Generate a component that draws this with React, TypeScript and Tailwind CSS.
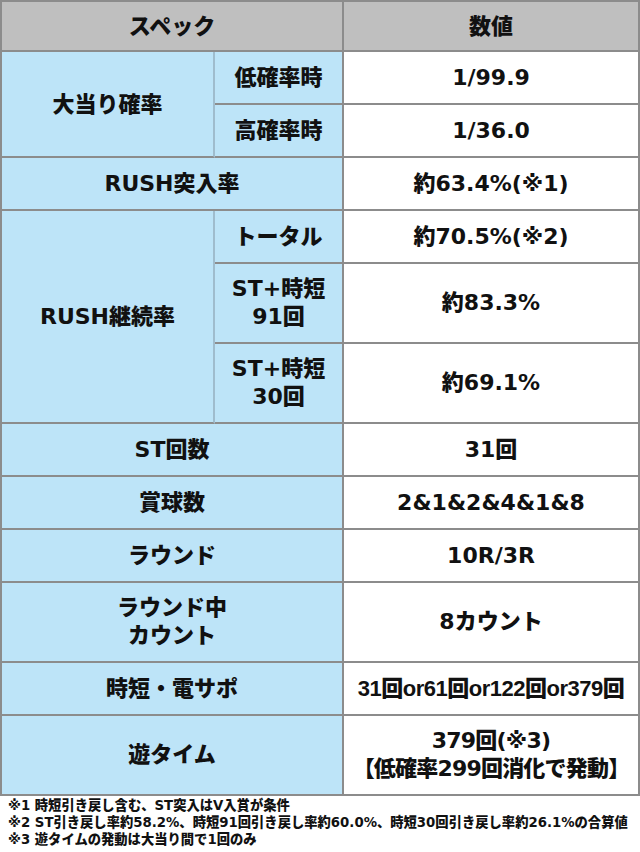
const font = '"DejaVu Sans", "Noto Sans CJK JP", sans-serif';

type Sub = { label: string[]; value: string[]; tall?: boolean };

function Value({ lines, className = '' }: { lines: string[]; className?: string }) {
  return (
    <div className={`flex flex-1 flex-col items-center justify-center text-[22px] leading-[28px] font-black ${className}`}>
      {lines.map((l, i) => (
        <span key={i}>{l}</span>
      ))}
    </div>
  );
}

function Label({ lines }: { lines: string[] }) {
  return (
    <>
      {lines.map((l, i) => (
        <span key={i}>{l}</span>
      ))}
    </>
  );
}

function SingleRow({ label, value, tall, valueClass }: { label: string[]; value: string[]; tall?: boolean; valueClass?: string }) {
  return (
    <div className={`flex border-b-2 border-[#8c8c8c] ${tall ? 'h-[80px]' : 'h-[53px]'}`}>
      <div className="w-[342px] shrink-0 flex flex-col items-center justify-center bg-[#bde4f8] border-r-2 border-[#8c8c8c] text-[22px] leading-[28px] font-black">
        <Label lines={label} />
      </div>
      <div className="flex flex-1 bg-white">
        <Value lines={value} className={valueClass} />
      </div>
    </div>
  );
}

function GroupRow({ label, subs }: { label: string; subs: Sub[] }) {
  return (
    <div className="flex">
      <div className="w-[213px] shrink-0 flex items-center justify-center bg-[#bde4f8] border-r-2 border-r-[#9fbccd] border-b-2 border-b-[#8c8c8c] text-[22px] font-black">
        {label}
      </div>
      <div className="flex flex-1 flex-col">
        {subs.map((s, i) => (
          <div key={i} className={`flex border-b-2 border-[#8c8c8c] ${s.tall ? 'h-[80px]' : 'h-[53px]'}`}>
            <div className="w-[129px] shrink-0 flex flex-col items-center justify-center bg-[#bde4f8] border-r-2 border-[#8c8c8c] text-[22px] leading-[28px] font-black">
              <Label lines={s.label} />
            </div>
            <div className="flex flex-1 bg-white">
              <Value lines={s.value} />
            </div>
          </div>
        ))}
      </div>
    </div>
  );
}

export default function App() {
  return (
    <div className="w-[640px] h-[852px] bg-white text-[#111]" style={{ fontFamily: font }}>
      <div className="border-x-2 border-t-2 border-[#8c8c8c]">
        {/* header */}
        <div className="flex h-[50px] bg-[#bfbfbf] border-b-2 border-[#8c8c8c] text-[22px] font-black">
          <div className="w-[342px] shrink-0 flex items-center justify-center border-r-2 border-[#8c8c8c]">スペック</div>
          <div className="flex flex-1 items-center justify-center">数値</div>
        </div>

        <GroupRow
          label="大当り確率"
          subs={[
            { label: ['低確率時'], value: ['1/99.9'] },
            { label: ['高確率時'], value: ['1/36.0'] },
          ]}
        />
        <SingleRow label={['RUSH突入率']} value={['約63.4%(※1)']} />
        <GroupRow
          label="RUSH継続率"
          subs={[
            { label: ['トータル'], value: ['約70.5%(※2)'] },
            { label: ['ST+時短', '91回'], value: ['約83.3%'], tall: true },
            { label: ['ST+時短', '30回'], value: ['約69.1%'], tall: true },
          ]}
        />
        <SingleRow label={['ST回数']} value={['31回']} />
        <SingleRow label={['賞球数']} value={['2&1&2&4&1&8']} />
        <SingleRow label={['ラウンド']} value={['10R/3R']} />
        <SingleRow label={['ラウンド中', 'カウント']} value={['8カウント']} tall />
        <SingleRow
          label={['時短・電サポ']}
          value={['31回or61回or122回or379回']}
          valueClass="font-['Liberation_Sans','Noto_Sans_CJK_JP',sans-serif] tracking-[-0.5px]"
        />
        <SingleRow
          label={['遊タイム']}
          value={['379回(※3)', '【低確率299回消化で発動】']}
          valueClass="tracking-[-0.8px]"
          tall
        />
      </div>

      {/* notes */}
      <div className="pl-[8px] pt-[1px] text-[13.3px] leading-[17px] font-black">
        <p>※1 時短引き戻し含む、ST突入はV入賞が条件</p>
        <p>※2 ST引き戻し率約58.2%、時短91回引き戻し率約60.0%、時短30回引き戻し率約26.1%の合算値</p>
        <p>※3 遊タイムの発動は大当り間で1回のみ</p>
      </div>
    </div>
  );
}
